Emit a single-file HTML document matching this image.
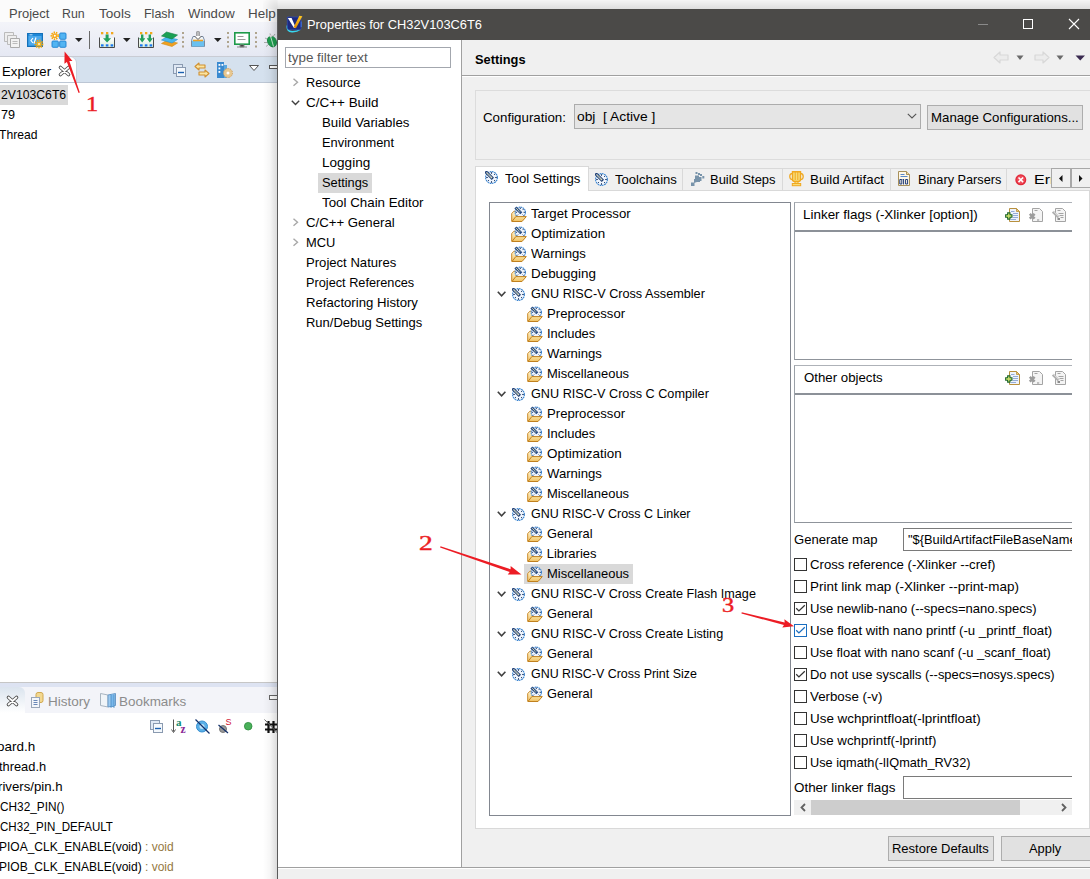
<!DOCTYPE html><html><head><meta charset="utf-8"><style>
html,body{margin:0;padding:0;width:1090px;height:879px;overflow:hidden;background:#fff;}
body{position:relative;font-family:"Liberation Sans", sans-serif;}
.t{position:absolute;white-space:pre;line-height:1;}
.r{position:absolute;box-sizing:border-box;}
svg.r{overflow:visible}
.clip{position:absolute;overflow:hidden}
</style></head><body>

<svg width="0" height="0" style="position:absolute">
<defs>
<linearGradient id="gFold" x1="0" y1="0" x2="0" y2="1"><stop offset="0" stop-color="#fff4d0"/><stop offset="1" stop-color="#f3c46a"/></linearGradient>
<linearGradient id="gFold2" x1="0" y1="0" x2="0" y2="1"><stop offset="0" stop-color="#fbe3a0"/><stop offset="1" stop-color="#f0c060"/></linearGradient>
<symbol id="gear" viewBox="0 0 13 13">
 <circle cx="6.5" cy="6.5" r="5.9" fill="#f0f5fc" stroke="#3a84d0" stroke-width="1.1" stroke-dasharray="1.7 0.6"/>
 <path d="M6.5 1.2v1.6M6.5 10.2v1.6M1.2 6.5h1.6M10.2 6.5h1.6M2.8 10.2l1.1-1.1M10.2 10.2l-1.1-1.1M10.2 2.8l-1.1 1.1" stroke="#203a68" stroke-width="1"/>
 <path d="M0.4 0.4L7.9 7.9" stroke="#1f3f78" stroke-width="3.2"/>
 <path d="M1.4 1.4L7 7" stroke="#f6eec0" stroke-width="1.3"/>
 <path d="M1.8 1.8L6.8 6.8" stroke="#2a5290" stroke-width="0.8" stroke-dasharray="0.7 1.1"/>
</symbol>
<symbol id="fgear" viewBox="0 0 16 16">
 <path d="M0.7 15.2V7.6L2.9 5.2H6V10.6L1.4 15.4Z" fill="url(#gFold)" stroke="#c98a2c" stroke-width="1"/>
 <g transform="translate(3.6,0.6) scale(0.88)">
 <circle cx="6.5" cy="6.5" r="5.9" fill="#f0f5fc" stroke="#3a84d0" stroke-width="1.2" stroke-dasharray="1.7 0.6"/>
 <path d="M6.5 1.2v1.6M1.2 6.5h1.6M10.2 6.5h1.6M2.8 10.2l1.1-1.1M10.2 10.2l-1.1-1.1M10.2 2.8l-1.1 1.1" stroke="#203a68" stroke-width="1.1"/>
 <path d="M0.9 0.9L7.6 7.6" stroke="#244a86" stroke-width="3.2"/>
 <path d="M1.7 1.7L6.7 6.7" stroke="#f4ecb0" stroke-width="1.2" stroke-dasharray="1 0.85"/>
 </g>
 <path d="M4.8 10.6H15.3L11 15.5H1Z" fill="url(#gFold2)" stroke="#c0801e" stroke-width="1" stroke-linejoin="round"/>
</symbol>
<symbol id="adddoc" viewBox="0 0 16 15">
 <path d="M4.5 0.5H11.5L14.5 3.5V13.5H4.5Z" fill="#eef3fc" stroke="#b8903e" stroke-width="1"/>
 <path d="M11.5 0.5V3.5H14.5Z" fill="#f0c878" stroke="#b8903e" stroke-width="0.8"/>
 <path d="M6 3.5h3.5M8 5.5h5M8 7.5h5M8 9.5h5M6 11.5h5" stroke="#8aa4d4" stroke-width="0.9"/>
 <path d="M3.8 4.3v7.4M0.1 8h7.4" stroke="#1b6428" stroke-width="3.4"/>
 <path d="M3.8 5.4v5.2M1.2 8h5.2" stroke="#d2e46c" stroke-width="1.3"/>
</symbol>
<symbol id="deldoc" viewBox="0 0 16 15">
 <path d="M4.5 0.5H11.5L14.5 3.5V13.5H4.5Z" fill="#f4f4f4" stroke="#a4a4a4" stroke-width="1"/>
 <path d="M6.5 2.5h3" stroke="#a4a4a4" stroke-width="1"/>
 <path d="M1.8 5.8L6.6 10.6M6.6 5.8L1.8 10.6" stroke="#9c9c9c" stroke-width="2.6"/>
 <path d="M9 12h2.2" stroke="#9c9c9c" stroke-width="1.2"/>
</symbol>
<symbol id="editdoc" viewBox="0 0 16 15">
 <path d="M3.5 0.5H10.5L13.5 3.5V13.5H3.5Z" fill="#f4f4f4" stroke="#a4a4a4" stroke-width="1"/>
 <path d="M5.5 2.5h3M6.5 5.5h5M7.5 7.5h4M8.5 9.5h3" stroke="#a4a4a4" stroke-width="1"/>
 <path d="M0.8 3.6L6.6 9.4" stroke="#b0b0b0" stroke-width="2.6"/>
 <path d="M1.4 3.2L6.8 8.6" stroke="#e8e8e8" stroke-width="0.8"/>
 <path d="M5.5 10h2.5v2h-2.5z" fill="#8c8c8c"/>
</symbol>
<symbol id="chk" viewBox="0 0 13 13">
 <path d="M2.2 6.3L4.9 8.9L10.8 3.3" fill="none" stroke="currentColor" stroke-width="1.3"/>
</symbol>
</defs></svg>

<div class="r" style="left:0px;top:0px;width:278px;height:22px;background:#fbfbfb"></div>
<div class="r" style="left:0px;top:22px;width:278px;height:35px;background:linear-gradient(#f3f4f9,#e5e8f3)"></div>
<div class="r" style="left:0px;top:56px;width:278px;height:1px;background:#c9ccd4"></div>
<div class="t" style="left:8.51px;top:7.00px;font-size:13px;color:#4a4a4a;transform:scaleX(0.9949);transform-origin:0 0;">Project</div>
<div class="t" style="left:62.45px;top:7.00px;font-size:13px;color:#4a4a4a;transform:scaleX(0.9500);transform-origin:0 0;">Run</div>
<div class="t" style="left:99.14px;top:7.00px;font-size:13px;color:#4a4a4a;transform:scaleX(1.0454);transform-origin:0 0;">Tools</div>
<div class="t" style="left:144.14px;top:7.00px;font-size:13px;color:#4a4a4a;transform:scaleX(0.9600);transform-origin:0 0;">Flash</div>
<div class="t" style="left:188.30px;top:7.00px;font-size:13px;color:#4a4a4a;transform:scaleX(1.0097);transform-origin:0 0;">Window</div>
<div class="t" style="left:248.17px;top:7.00px;font-size:13px;color:#4a4a4a;transform:scaleX(1.0337);transform-origin:0 0;">Help</div>
<svg class="r" style="left:4px;top:32px;" width="16" height="16" viewBox="0 0 16 16"><path d="M0.5 0.5h9v9h-9z" fill="#eee" stroke="#bbb"/><path d="M3.5 3.5h9v9h-9z" fill="#eee" stroke="#bbb"/><path d="M6.5 6.5h9v9h-9z" fill="#f2f2f2" stroke="#aaa"/><path d="M8.5 9.5h5M8.5 11.5h5" stroke="#bbb"/></svg>
<svg class="r" style="left:27px;top:32px;" width="16" height="16" viewBox="0 0 16 16"><rect x="0.5" y="1.5" width="15" height="13" fill="#1e88d8" stroke="#1570b8"/><rect x="1.5" y="4" width="13" height="9.5" fill="#4aa8ec"/><path d="M2.5 2.8h3" stroke="#bfe2fb"/><path d="M6 6L4 8.5L6 11M9 5.5L7 11.5" stroke="#fff" stroke-width="1.2" fill="none"/><circle cx="12" cy="12" r="3.6" fill="none" stroke="#f5a300" stroke-width="1.6" stroke-dasharray="1.4 1"/><circle cx="12" cy="12" r="2.6" fill="#f6b21a"/><circle cx="12" cy="12" r="1" fill="#fff6d0"/></svg>
<svg class="r" style="left:51px;top:32px;" width="16" height="16" viewBox="0 0 16 16"><circle cx="3.8" cy="3.8" r="3.4" fill="none" stroke="#f5a300" stroke-width="1.6" stroke-dasharray="1.4 1"/><circle cx="3.8" cy="3.8" r="2.5" fill="#f6a81a"/><circle cx="3.8" cy="3.8" r="1" fill="#fff"/><rect x="8.7" y="1" width="6.3" height="6.3" rx="1" fill="#52b4f2" stroke="#1c80d0" stroke-width="0.9"/><rect x="1" y="9" width="6.3" height="6.3" rx="1" fill="#52b4f2" stroke="#1c80d0" stroke-width="0.9"/><rect x="8.7" y="9" width="6.3" height="6.3" rx="1" fill="#52b4f2" stroke="#1c80d0" stroke-width="0.9"/></svg>
<svg class="r" style="left:75px;top:38px;" width="8" height="4" viewBox="0 0 8 4"><path d="M0 0h7.5L3.75 4z" fill="#222"/></svg>
<div class="r" style="left:89px;top:31px;width:1px;height:18px;background:#6a6a6a"></div>
<svg class="r" style="left:99px;top:31px;" width="16" height="17" viewBox="0 0 16 17"><defs><linearGradient id="gdl" x1="0" y1="0" x2="0" y2="1"><stop offset="0" stop-color="#fff"/><stop offset="1" stop-color="#d8ecd8"/></linearGradient></defs><rect x="2" y="1" width="2.3" height="2.3" fill="#f2a81d"/><rect x="7" y="1" width="2.3" height="2.3" fill="#f2a81d"/><rect x="12" y="1" width="2.3" height="2.3" fill="#f2a81d"/><rect x="1" y="7" width="14" height="9" fill="url(#gdl)"/><path d="M0.5 6.5V16.5H15.5V6.5" fill="none" stroke="#4a4a4a"/><path d="M6.6 3.5h3v3.8h2.6L8.1 11.6L4 7.3h2.6z" fill="#22a05c"/><rect x="2" y="13.3" width="2.6" height="2.2" fill="#1a78f0"/><rect x="6.8" y="13.3" width="2.6" height="2.2" fill="#1a78f0"/><rect x="11.6" y="13.3" width="2.6" height="2.2" fill="#1a78f0"/></svg>
<svg class="r" style="left:123px;top:38px;" width="8" height="4" viewBox="0 0 8 4"><path d="M0 0h7.5L3.75 4z" fill="#222"/></svg>
<svg class="r" style="left:138px;top:31px;" width="16" height="17" viewBox="0 0 16 17"><rect x="2" y="1" width="2.3" height="2.3" fill="#f2a81d"/><rect x="7" y="1" width="2.3" height="2.3" fill="#f2a81d"/><rect x="12" y="1" width="2.3" height="2.3" fill="#f2a81d"/><rect x="1" y="7" width="14" height="9" fill="url(#gdl)"/><path d="M0.5 6.5V16.5H15.5V6.5" fill="none" stroke="#4a4a4a"/><path d="M3 3.5h2.4v3.8h2L4.2 11.6L1 7.3h2zM10.6 3.5h2.4v3.8h2L11.8 11.6L8.6 7.3h2z" fill="#22a05c"/><rect x="2" y="13.3" width="2.6" height="2.2" fill="#1a78f0"/><rect x="6.8" y="13.3" width="2.6" height="2.2" fill="#1a78f0"/><rect x="11.6" y="13.3" width="2.6" height="2.2" fill="#1a78f0"/></svg>
<svg class="r" style="left:161px;top:31px;" width="17" height="17" viewBox="0 0 17 17"><path d="M0.5 12.5L5.5 9.5L16.5 12L11 15.5z" fill="#f0a020" stroke="#d08810" stroke-width="0.6"/><path d="M0.5 9L5.5 6L16.5 8.5L11 12z" fill="#48b8f0" stroke="#2a90d0" stroke-width="0.6"/><path d="M0.5 5L5.5 1L16.5 4L11 8z" fill="#1aa055" stroke="#108040" stroke-width="0.6"/></svg>
<svg class="r" style="left:182px;top:32px;" width="2" height="16" viewBox="0 0 2 16"><path d="M1 0v2M1 4.5v2M1 9v2M1 13.5v2" stroke="#9a8a6a" stroke-width="1.5"/></svg>
<svg class="r" style="left:190px;top:31px;" width="16" height="17" viewBox="0 0 16 17"><path d="M1.5 9.5L3 5.5H13L14.5 9.5V15.5H1.5Z" fill="#eef4fa" stroke="#7a8aa0"/><path d="M2 9.5h12v6h-12z" fill="#6ac0f0"/><path d="M3 9.5h10" stroke="#f0a020" stroke-width="1.6"/><path d="M8 0.5v6" stroke="#555" stroke-width="3"/><path d="M8 1v5.5" stroke="#fff" stroke-width="1.2"/><path d="M4.5 5L8 8.5L11.5 5" fill="#fff" stroke="#555"/></svg>
<svg class="r" style="left:214px;top:38px;" width="8" height="4" viewBox="0 0 8 4"><path d="M0 0h7.5L3.75 4z" fill="#222"/></svg>
<svg class="r" style="left:227px;top:32px;" width="2" height="16" viewBox="0 0 2 16"><path d="M1 0v2M1 4.5v2M1 9v2M1 13.5v2" stroke="#9a8a6a" stroke-width="1.5"/></svg>
<svg class="r" style="left:234px;top:32px;" width="16" height="16" viewBox="0 0 16 16"><rect x="0.8" y="0.8" width="14.4" height="11.4" fill="#fff" stroke="#1e9a4a" stroke-width="1.6"/><path d="M3.5 4.5h6M3.5 7.5h8" stroke="#999" stroke-width="1.2"/><path d="M6 13h4v2h-4zM3 15h10" stroke="#888" stroke-width="1"/></svg>
<svg class="r" style="left:255px;top:32px;" width="2" height="16" viewBox="0 0 2 16"><path d="M1 0v2M1 4.5v2M1 9v2M1 13.5v2" stroke="#9a8a6a" stroke-width="1.5"/></svg>
<svg class="r" style="left:263px;top:32px;" width="15" height="16" viewBox="0 0 15 16"><path d="M2 6l3 1.5M1 10.5h3.5M3 14.5l2.5-2M12 2l-1.5 2M7 1.5l0.5 2" stroke="#999" stroke-width="0.8"/><ellipse cx="9" cy="9.5" rx="4.3" ry="5.6" transform="rotate(-25 9 9.5)" fill="#1ea050" stroke="#168040" stroke-width="0.8"/><path d="M6.5 4.5Q8 3.5 9.5 4" stroke="#ddd" stroke-width="2"/><path d="M7.8 5L10.5 14.5" stroke="#d8efe0" stroke-width="0.9"/></svg>
<div class="r" style="left:0px;top:57px;width:278px;height:26px;background:#d5e1ee"></div>
<div class="r" style="left:0;top:57px;width:76px;height:26px;background:#fff;border-top-right-radius:6px;box-shadow:1px 0 0 #c8d2de"></div>
<div class="r" style="left:0px;top:82px;width:278px;height:1px;background:#bcc6d4"></div>
<div class="t" style="left:1.79px;top:65.00px;font-size:13px;color:#000;transform:scaleX(1.0138);transform-origin:0 0;">Explorer</div>
<svg class="r" style="left:59px;top:66px;" width="11" height="10" viewBox="0 0 11 10"><path d="M1.5 1.5L9.5 8.5M9.5 1.5L1.5 8.5" stroke="#505050" stroke-width="3.6" stroke-linecap="round"/><path d="M1.5 1.5L9.5 8.5M9.5 1.5L1.5 8.5" stroke="#fff" stroke-width="1.7" stroke-linecap="round"/></svg>
<svg class="r" style="left:173px;top:64px;" width="13" height="13" viewBox="0 0 13 13"><rect x="0.5" y="0.5" width="9" height="9" fill="#dfe8f4" stroke="#8a9ab0"/><rect x="3.5" y="3.5" width="9" height="9" fill="#f4f8fc" stroke="#8a9ab0"/><path d="M5 8.5h6" stroke="#1a60b0" stroke-width="1.4"/></svg>
<svg class="r" style="left:194px;top:62px;" width="16" height="16" viewBox="0 0 16 16"><path d="M1 4.5L5 1V3H11V6H5V8Z" fill="#fbe5a0" stroke="#d09030" stroke-width="1.1" stroke-linejoin="round"/><path d="M15 11.5L11 8V10H5V13H11V15Z" fill="#fbe5a0" stroke="#d09030" stroke-width="1.1" stroke-linejoin="round"/></svg>
<svg class="r" style="left:217px;top:62px;" width="16" height="16" viewBox="0 0 16 16"><rect x="0" y="0" width="7" height="16" fill="#3a8ad0"/><rect x="1.5" y="2" width="1.8" height="1.8" fill="#fff"/><rect x="4.5" y="2" width="1.8" height="1.8" fill="#fff"/><rect x="1.5" y="5.5" width="1.8" height="1.8" fill="#fff"/><rect x="1.5" y="9" width="1.8" height="1.8" fill="#fff"/><rect x="7" y="3" width="3" height="13" fill="#5aa8e0"/><circle cx="11" cy="11" r="4.5" fill="#e8c890" stroke="#d0a060" stroke-dasharray="1.5 1"/><circle cx="11" cy="11" r="1.5" fill="#fff"/></svg>
<svg class="r" style="left:249px;top:65px;" width="10" height="6" viewBox="0 0 10 6"><path d="M0.5 0.5h9L5 5.5z" fill="#fff" stroke="#555"/></svg>
<svg class="r" style="left:269px;top:65px;" width="9" height="4" viewBox="0 0 9 4"><rect x="0.5" y="0.5" width="10" height="3" fill="#fff" stroke="#555"/></svg>
<div class="r" style="left:0px;top:85px;width:68px;height:20px;background:#d9d9d9"></div>
<div class="t" style="left:0.93px;top:88.00px;font-size:13px;color:#000;transform:scaleX(0.9392);transform-origin:0 0;">2V103C6T6</div>
<div class="t" style="left:0.91px;top:108.00px;font-size:13px;color:#000;transform:scaleX(0.9704);transform-origin:0 0;">79</div>
<div class="t" style="left:-0.53px;top:128.00px;font-size:13px;color:#000;transform:scaleX(0.9317);transform-origin:0 0;">Thread</div>
<svg class="r" style="left:0px;top:0px;" width="1" height="1" viewBox="0 0 1 1"><path d="M79.81 92.58 L69.33 61.06 L72.45 61.02 L64.60 51.60 L64.44 63.86 L66.88 61.93 L78.59 93.02Z" fill="#ec1c24"/></svg>
<div class="t" style="left:85.88px;top:94.07px;font-size:20px;color:#ec1c24;transform:scaleX(1.2143);transform-origin:0 0;font-family:'Liberation Serif',serif;-webkit-text-stroke:0.45px #ec1c24;">1</div>
<div class="r" style="left:0px;top:682px;width:278px;height:1px;background:#c6c6c6"></div>
<div class="r" style="left:0px;top:683px;width:278px;height:4px;background:#dde3f2"></div>
<div class="r" style="left:0px;top:687px;width:278px;height:26px;background:#f3f4f9"></div>
<div class="r" style="left:0;top:687px;width:25px;height:26px;background:linear-gradient(#dbe4ee,#fff);border-top-right-radius:6px"></div>
<svg class="r" style="left:7px;top:696px;" width="11" height="10" viewBox="0 0 11 10"><path d="M1.5 1.5L9.5 8.5M9.5 1.5L1.5 8.5" stroke="#505050" stroke-width="3.6" stroke-linecap="round"/><path d="M1.5 1.5L9.5 8.5M9.5 1.5L1.5 8.5" stroke="#fff" stroke-width="1.7" stroke-linecap="round"/></svg>
<svg class="r" style="left:31px;top:692px;" width="13" height="16" viewBox="0 0 13 16"><rect x="5" y="0.5" width="7" height="10" rx="2" fill="#f3d890" stroke="#d0a850"/><rect x="0.5" y="5.5" width="8" height="10" fill="#f4f6fa" stroke="#9aa6b8"/><path d="M2.5 8.5h4M2.5 10.5h4M2.5 12.5h4" stroke="#6a88b8"/></svg>
<div class="t" style="left:47.76px;top:695.00px;font-size:13px;color:#8c8c8c;transform:scaleX(1.0405);transform-origin:0 0;">History</div>
<svg class="r" style="left:100px;top:692px;" width="16" height="16" viewBox="0 0 16 16"><path d="M0.5 1.5L8 3V15L0.5 13.5z" fill="#f0f4f8" stroke="#a8b4c0"/><path d="M8 3L15.5 1.5V13.5L8 15z" fill="#9ccaf0" stroke="#6a9ac8"/><path d="M11 2.5v13l1.5-1.5 1.5 1.5v-13" fill="#7ab8ec" stroke="#4a8ac0" stroke-width="0.8"/></svg>
<div class="t" style="left:118.97px;top:695.00px;font-size:13px;color:#8c8c8c;transform:scaleX(1.0346);transform-origin:0 0;">Bookmarks</div>
<div class="r" style="left:0px;top:713px;width:278px;height:166px;background:#fff"></div>
<svg class="r" style="left:150px;top:720px;" width="13" height="13" viewBox="0 0 13 13"><rect x="0.5" y="0.5" width="9" height="9" fill="#dfe8f4" stroke="#8a9ab0"/><rect x="3.5" y="3.5" width="9" height="9" fill="#f4f8fc" stroke="#8a9ab0"/><path d="M5 8.5h6" stroke="#1a60b0" stroke-width="1.4"/></svg>
<svg class="r" style="left:171px;top:719px;" width="17" height="15" viewBox="0 0 17 15"><path d="M2.5 0.5v12" stroke="#555" stroke-width="1"/><path d="M0.5 10.5L2.5 13.5L4.5 10.5" fill="none" stroke="#555"/></svg>
<div class="t" style="left:176.00px;top:716.69px;font-size:11px;color:#108a70;font-weight:bold;font-family:'Liberation Serif',serif;">a</div>
<div class="t" style="left:180.50px;top:723.77px;font-size:11.5px;color:#8a2a98;font-weight:bold;font-family:'Liberation Serif',serif;">z</div>
<svg class="r" style="left:195px;top:719px;" width="15" height="15" viewBox="0 0 15 15"><circle cx="7" cy="7.5" r="5.5" fill="#5ab0e8" stroke="#3a90d0"/><circle cx="7" cy="7.5" r="2.5" fill="#bfe4fa"/><path d="M0.5 0.5L14.5 14.5" stroke="#12306a" stroke-width="1.2"/></svg>
<svg class="r" style="left:218px;top:719px;" width="14" height="15" viewBox="0 0 14 15"><circle cx="5" cy="10" r="3.5" fill="#999" stroke="#777"/><path d="M0.5 6L10 14" stroke="#12306a" stroke-width="1.2"/></svg>
<div class="t" style="left:225.50px;top:718.38px;font-size:9px;color:#d01030;">S</div>
<svg class="r" style="left:244px;top:722px;" width="9" height="9" viewBox="0 0 9 9"><circle cx="4.2" cy="4.2" r="3.8" fill="#4ab05a" stroke="#2a8a3a" stroke-width="0.8"/></svg>
<svg class="r" style="left:264px;top:719px;" width="14" height="15" viewBox="0 0 14 15"><path d="M4.5 2v12M9.5 2v12M1 5.5h13M1 10.5h13" stroke="#111" stroke-width="2.2"/><path d="M0.5 0.5L13.5 14" stroke="#666" stroke-width="1"/></svg>
<svg class="r" style="left:269px;top:695px;" width="9" height="5" viewBox="0 0 9 5"><rect x="0.5" y="0.5" width="10" height="4" fill="#fff" stroke="#666"/></svg>
<div class="t" style="left:-2.52px;top:739.70px;font-size:13px;color:#000;transform:scaleX(1.0338);transform-origin:0 0;">oard.h</div>
<div class="t" style="left:-1.00px;top:759.70px;font-size:13px;color:#000;transform:scaleX(0.9872);transform-origin:0 0;">thread.h</div>
<div class="t" style="left:-2.26px;top:779.70px;font-size:13px;color:#000;transform:scaleX(1.0145);transform-origin:0 0;">rivers/pin.h</div>
<div class="t" style="left:-0.45px;top:799.70px;font-size:13px;color:#000;transform:scaleX(0.9094);transform-origin:0 0;">CH32_PIN()</div>
<div class="t" style="left:-0.44px;top:819.70px;font-size:13px;color:#000;transform:scaleX(0.8895);transform-origin:0 0;">CH32_PIN_DEFAULT</div>
<div class="t" style="left:-0.92px;top:839.50px;font-size:13px;color:#000;transform:scaleX(0.9227);transform-origin:0 0;">PIOA_CLK_ENABLE(void)<span style="color:#957944"> : void</span></div>
<div class="t" style="left:-0.92px;top:859.50px;font-size:13px;color:#000;transform:scaleX(0.9227);transform-origin:0 0;">PIOB_CLK_ENABLE(void)<span style="color:#957944"> : void</span></div>
<div class="r" style="left:263px;top:9px;width:14px;height:870px;background:linear-gradient(to right,rgba(0,0,0,0),rgba(0,0,0,0.035) 50%,rgba(0,0,0,0.14))"></div>
<div class="r" style="left:277px;top:0px;width:813px;height:9px;background:linear-gradient(rgba(0,0,0,0.04),rgba(0,0,0,0.13))"></div>
<div class="r" style="left:263px;top:0px;width:14px;height:9px;background:radial-gradient(circle at 100% 100%,rgba(0,0,0,0.13),rgba(0,0,0,0.03) 70%,rgba(0,0,0,0) 100%)"></div>
<div class="r" style="left:277px;top:9px;width:813px;height:31px;background:#4b4a48"></div>
<svg class="r" style="left:286px;top:15px;" width="17" height="18" viewBox="0 0 17 18"><defs><linearGradient id="gy" x1="0" y1="1" x2="0" y2="0"><stop offset="0" stop-color="#e08a00"/><stop offset="1" stop-color="#ffc820"/></linearGradient></defs><path d="M1.2 10.5Q0.5 16.5 6 16.8Q11 17 14 14.5" fill="none" stroke="#38d8ee" stroke-width="1.5"/><path d="M1.3 2H15V13.5Q15 14.8 13.7 14.8H3.5Q1.3 14.8 1.3 12.5Z" fill="#1d2a80" stroke="#2e4cb8" stroke-width="0.7"/><path d="M15.2 6.5V12" stroke="#3a70e8" stroke-width="1"/><path d="M1.8 3L5.6 3L9.6 12.4L8 13z" fill="#fff"/><path d="M7.6 12.2L13.4 0.8L16.4 1.3L9.9 13.2z" fill="url(#gy)"/></svg>
<div class="t" style="left:306.51px;top:18.00px;font-size:13px;color:#fff;transform:scaleX(0.9886);transform-origin:0 0;">Properties for CH32V103C6T6</div>
<div class="r" style="left:978px;top:24px;width:10px;height:1px;background:#8a8a8a"></div>
<div class="r" style="left:1023px;top:19px;width:10px;height:10px;border:1px solid #fff"></div>
<svg class="r" style="left:1069px;top:19px;" width="10" height="10" viewBox="0 0 10 10"><path d="M0 0L10 10M10 0L0 10" stroke="#fff" stroke-width="1.1"/></svg>
<div class="r" style="left:277px;top:40px;width:813px;height:839px;background:#f0f0f0"></div>
<div class="r" style="left:277px;top:9px;width:1px;height:870px;background:#5a5a5a"></div>
<div class="r" style="left:278px;top:40px;width:183px;height:827px;background:#fff"></div>
<div class="r" style="left:461px;top:40px;width:1px;height:828px;background:#a0a0a0"></div>
<div class="r" style="left:285px;top:47px;width:166px;height:21px;background:#fff;border:1px solid #a3a7ae"></div>
<div class="t" style="left:287.70px;top:51.00px;font-size:13px;color:#575757;transform:scaleX(1.0317);transform-origin:0 0;">type filter text</div>
<div class="r" style="left:318px;top:173px;width:54px;height:20px;background:#d9d9d9"></div>
<svg class="r" style="left:292px;top:78px;" width="8" height="9" viewBox="0 0 8 9"><path d="M1.5 0.8L5.5 4.3L1.5 7.8" fill="none" stroke="#a8a8a8" stroke-width="1.4"/></svg>
<div class="t" style="left:305.60px;top:76.00px;font-size:13px;color:#000;transform:scaleX(0.9792);transform-origin:0 0;">Resource</div>
<svg class="r" style="left:291px;top:100px;" width="9" height="6" viewBox="0 0 9 6"><path d="M0.8 0.8L4.5 4.5L8.2 0.8" fill="none" stroke="#404040" stroke-width="1.4"/></svg>
<div class="t" style="left:305.60px;top:96.00px;font-size:13px;color:#000;transform:scaleX(1.0354);transform-origin:0 0;">C/C++ Build</div>
<div class="t" style="left:321.70px;top:116.00px;font-size:13px;color:#000;transform:scaleX(1.0194);transform-origin:0 0;">Build Variables</div>
<div class="t" style="left:321.70px;top:136.00px;font-size:13px;color:#000;transform:scaleX(0.9877);transform-origin:0 0;">Environment</div>
<div class="t" style="left:321.70px;top:156.00px;font-size:13px;color:#000;transform:scaleX(1.0418);transform-origin:0 0;">Logging</div>
<div class="t" style="left:321.70px;top:176.00px;font-size:13px;color:#000;transform:scaleX(0.9849);transform-origin:0 0;">Settings</div>
<div class="t" style="left:321.70px;top:196.00px;font-size:13px;color:#000;transform:scaleX(1.0258);transform-origin:0 0;">Tool Chain Editor</div>
<svg class="r" style="left:292px;top:218px;" width="8" height="9" viewBox="0 0 8 9"><path d="M1.5 0.8L5.5 4.3L1.5 7.8" fill="none" stroke="#a8a8a8" stroke-width="1.4"/></svg>
<div class="t" style="left:305.60px;top:216.00px;font-size:13px;color:#000;transform:scaleX(1.0144);transform-origin:0 0;">C/C++ General</div>
<svg class="r" style="left:292px;top:238px;" width="8" height="9" viewBox="0 0 8 9"><path d="M1.5 0.8L5.5 4.3L1.5 7.8" fill="none" stroke="#a8a8a8" stroke-width="1.4"/></svg>
<div class="t" style="left:305.60px;top:236.00px;font-size:13px;color:#000;transform:scaleX(0.9913);transform-origin:0 0;">MCU</div>
<div class="t" style="left:305.60px;top:256.00px;font-size:13px;color:#000;transform:scaleX(1.0073);transform-origin:0 0;">Project Natures</div>
<div class="t" style="left:305.60px;top:276.00px;font-size:13px;color:#000;transform:scaleX(0.9787);transform-origin:0 0;">Project References</div>
<div class="t" style="left:305.60px;top:296.00px;font-size:13px;color:#000;transform:scaleX(1.0127);transform-origin:0 0;">Refactoring History</div>
<div class="t" style="left:305.60px;top:316.00px;font-size:13px;color:#000;transform:scaleX(0.9983);transform-origin:0 0;">Run/Debug Settings</div>
<div class="t" style="left:474.75px;top:53.00px;font-size:13px;color:#000;font-weight:bold;transform:scaleX(0.9861);transform-origin:0 0;">Settings</div>
<svg class="r" style="left:993px;top:51px;" width="17" height="14" viewBox="0 0 17 14"><path d="M1 6.5L7 1V4H15V9H7V12Z" fill="#ececec" stroke="#d8d8d8" stroke-width="1.2" stroke-linejoin="round"/></svg>
<svg class="r" style="left:1016px;top:55px;" width="8" height="6" viewBox="0 0 8 6"><path d="M0.5 0.5h7L4 5z" fill="#6a6a6a"/></svg>
<svg class="r" style="left:1033px;top:51px;" width="17" height="14" viewBox="0 0 17 14"><path d="M16 6.5L10 1V4H2V9H10V12Z" fill="#ececec" stroke="#d8d8d8" stroke-width="1.2" stroke-linejoin="round"/></svg>
<svg class="r" style="left:1056px;top:55px;" width="8" height="6" viewBox="0 0 8 6"><path d="M0.5 0.5h7L4 5z" fill="#6a6a6a"/></svg>
<svg class="r" style="left:1075px;top:55px;" width="10" height="6" viewBox="0 0 10 6"><path d="M0.5 0.5h9.5L5.25 5.5z" fill="#3a2a50"/></svg>
<div class="r" style="left:462px;top:75px;width:628px;height:1px;background:#a0a0a0"></div>
<div class="r" style="left:462px;top:76px;width:628px;height:1px;background:#fff"></div>
<div class="r" style="left:475px;top:90px;width:620px;height:70px;border:1px solid #dcdcdc"></div>
<div class="t" style="left:483.09px;top:110.50px;font-size:13px;color:#000;transform:scaleX(1.0246);transform-origin:0 0;">Configuration:</div>
<div class="r" style="left:574px;top:104px;width:347px;height:25px;background:#e5e5e5;border:1px solid #acacac"></div>
<div class="t" style="left:577.47px;top:110.00px;font-size:13px;color:#000;transform:scaleX(1.0630);transform-origin:0 0;">obj  [ Active ]</div>
<svg class="r" style="left:907px;top:113px;" width="10" height="6" viewBox="0 0 10 6"><path d="M0.8 0.8L5 5L9.2 0.8" fill="none" stroke="#555" stroke-width="1.1"/></svg>
<div class="r" style="left:927px;top:105px;width:156px;height:25px;background:#e1e1e1;border:1px solid #adadad"></div>
<div class="t" style="left:931.38px;top:111.00px;font-size:13px;color:#000;transform:scaleX(1.0175);transform-origin:0 0;">Manage Configurations...</div>
<div class="r" style="left:475px;top:190px;width:615px;height:639px;background:#fff;border:1px solid #d9d9d9"></div>
<div class="r" style="left:588px;top:168px;width:95px;height:23px;background:#f0f0f0;border:1px solid #d9d9d9"></div>
<div class="t" style="left:614.95px;top:173.30px;font-size:13px;color:#000;transform:scaleX(1.0074);transform-origin:0 0;">Toolchains</div>
<svg class="r" style="left:595px;top:173px;" width="13" height="13"><use href="#gear" width="13" height="13"/></svg>
<div class="r" style="left:682px;top:168px;width:101px;height:23px;background:#f0f0f0;border:1px solid #d9d9d9"></div>
<div class="t" style="left:710.30px;top:173.30px;font-size:13px;color:#000;transform:scaleX(0.9961);transform-origin:0 0;">Build Steps</div>
<svg class="r" style="left:690px;top:172px;" width="15" height="14" viewBox="0 0 15 14"><g fill="#7893aa"><rect x="5" y="3.5" width="4" height="5"/><path d="M4 7h6v3h-3l-3 1z"/><rect x="8" y="5" width="3.5" height="4"/><rect x="1" y="10.5" width="3.5" height="3.5"/><rect x="5.5" y="0" width="2" height="2"/><rect x="8" y="1" width="2" height="2"/><rect x="10" y="2" width="2" height="2"/><rect x="12.3" y="4" width="2" height="2.5"/></g></svg>
<div class="r" style="left:782px;top:168px;width:109px;height:23px;background:#f0f0f0;border:1px solid #d9d9d9"></div>
<div class="t" style="left:809.78px;top:173.30px;font-size:13px;color:#000;transform:scaleX(1.0246);transform-origin:0 0;">Build Artifact</div>
<svg class="r" style="left:789px;top:171px;" width="15" height="15" viewBox="0 0 15 15"><path d="M3.5 0.8H11.5V8.5Q11.5 10.5 9 10.5H6Q3.5 10.5 3.5 8.5Z" fill="#f8dc78" stroke="#f0a820" stroke-width="1.4"/><path d="M6.2 1v8M8.8 1v8" stroke="#f0a820" stroke-width="1"/><path d="M3.5 2.5Q0.8 2.5 0.8 5.5Q0.8 8.5 3.5 8.5M11.5 2.5Q14.2 2.5 14.2 5.5Q14.2 8.5 11.5 8.5" fill="none" stroke="#f0a820" stroke-width="1.3"/><rect x="6" y="10.5" width="3" height="2.5" fill="#f8dc78" stroke="#f0a820"/><rect x="3.3" y="12.5" width="8.4" height="2.2" fill="#f8dc78" stroke="#f0a820" stroke-width="1"/></svg>
<div class="r" style="left:890px;top:168px;width:117px;height:23px;background:#f0f0f0;border:1px solid #d9d9d9"></div>
<div class="t" style="left:917.52px;top:173.30px;font-size:13px;color:#000;transform:scaleX(0.9779);transform-origin:0 0;">Binary Parsers</div>
<svg class="r" style="left:898px;top:171px;" width="13" height="15" viewBox="0 0 13 15"><path d="M0.5 0.5H8.5L11.5 3.5V14.5H0.5Z" fill="#fff8e8" stroke="#a8905a"/><path d="M8.5 0.5V3.5H11.5" fill="#f0d8a0" stroke="#a8905a"/><path d="M2.5 3.5h4M2.5 5.5h7" stroke="#5a88c8"/><path d="M1.8 8.5h2v4.5h-2zM7.6 8.5h2v4.5h-2z" fill="none" stroke="#1e3a78" stroke-width="1"/><path d="M5.6 8v5.5M4.8 8.8l0.8-0.8" stroke="#1e3a78" stroke-width="1"/></svg>
<div class="r" style="left:1006px;top:168px;width:47px;height:23px;background:#f0f0f0;border:1px solid #d9d9d9"></div>
<div class="t" style="left:1033.77px;top:173.30px;font-size:13px;color:#000;transform:scaleX(1.2308);transform-origin:0 0;">Err</div>
<svg class="r" style="left:1015px;top:174px;" width="12" height="12" viewBox="0 0 12 12"><circle cx="5.8" cy="5.8" r="5.5" fill="#e02a3a"/><circle cx="5.8" cy="5.8" r="4.2" fill="#f04a58"/><path d="M3.5 3.5L8.1 8.1M8.1 3.5L3.5 8.1" stroke="#fff" stroke-width="1.6"/></svg>
<div class="r" style="left:475px;top:166px;width:114px;height:25px;background:#fff;border:1px solid #d9d9d9;border-bottom:none"></div>
<svg class="r" style="left:485px;top:171px;" width="13" height="13"><use href="#gear" width="13" height="13"/></svg>
<div class="t" style="left:505.25px;top:171.50px;font-size:13px;color:#000;transform:scaleX(1.0129);transform-origin:0 0;">Tool Settings</div>
<div class="r" style="left:1051px;top:188px;width:39px;height:2px;background:#f0f0f0"></div>
<div class="r" style="left:1051px;top:168px;width:20px;height:20px;background:#f0f0f0;border:1px solid #a8a8a8"></div>
<div class="r" style="left:1071px;top:168px;width:20px;height:20px;background:#f0f0f0;border:1px solid #a8a8a8"></div>
<svg class="r" style="left:1059px;top:175px;" width="4" height="7" viewBox="0 0 4 7"><path d="M3.5 0V7L0 3.5z" fill="#111"/></svg>
<svg class="r" style="left:1079px;top:175px;" width="4" height="7" viewBox="0 0 4 7"><path d="M0 0V7L3.5 3.5z" fill="#111"/></svg>
<div class="r" style="left:489px;top:202px;width:302px;height:614px;background:#fff;border:1px solid #828790"></div>
<div class="r" style="left:524px;top:564px;width:109px;height:20px;background:#d9d9d9"></div>
<svg class="r" style="left:511px;top:206px;" width="16" height="16"><use href="#fgear" width="16" height="16"/></svg>
<div class="t" style="left:531.00px;top:207.00px;font-size:13px;color:#000;transform:scaleX(1.0143);transform-origin:0 0;">Target Processor</div>
<svg class="r" style="left:511px;top:226px;" width="16" height="16"><use href="#fgear" width="16" height="16"/></svg>
<div class="t" style="left:531.00px;top:227.00px;font-size:13px;color:#000;transform:scaleX(1.0266);transform-origin:0 0;">Optimization</div>
<svg class="r" style="left:511px;top:246px;" width="16" height="16"><use href="#fgear" width="16" height="16"/></svg>
<div class="t" style="left:531.00px;top:247.00px;font-size:13px;color:#000;transform:scaleX(1.0074);transform-origin:0 0;">Warnings</div>
<svg class="r" style="left:511px;top:266px;" width="16" height="16"><use href="#fgear" width="16" height="16"/></svg>
<div class="t" style="left:531.00px;top:267.00px;font-size:13px;color:#000;transform:scaleX(1.0313);transform-origin:0 0;">Debugging</div>
<svg class="r" style="left:497px;top:291px;" width="10" height="7" viewBox="0 0 10 7"><path d="M0.8 0.8L4.6 4.8L8.4 0.8" fill="none" stroke="#404040" stroke-width="1.6"/></svg>
<svg class="r" style="left:512px;top:288px;" width="13" height="13"><use href="#gear" width="13" height="13"/></svg>
<div class="t" style="left:531.00px;top:287.00px;font-size:13px;color:#000;transform:scaleX(0.9745);transform-origin:0 0;">GNU RISC-V Cross Assembler</div>
<svg class="r" style="left:527px;top:306px;" width="16" height="16"><use href="#fgear" width="16" height="16"/></svg>
<div class="t" style="left:546.70px;top:307.00px;font-size:13px;color:#000;transform:scaleX(1.0097);transform-origin:0 0;">Preprocessor</div>
<svg class="r" style="left:527px;top:326px;" width="16" height="16"><use href="#fgear" width="16" height="16"/></svg>
<div class="t" style="left:546.70px;top:327.00px;font-size:13px;color:#000;transform:scaleX(0.9979);transform-origin:0 0;">Includes</div>
<svg class="r" style="left:527px;top:346px;" width="16" height="16"><use href="#fgear" width="16" height="16"/></svg>
<div class="t" style="left:546.70px;top:347.00px;font-size:13px;color:#000;transform:scaleX(1.0093);transform-origin:0 0;">Warnings</div>
<svg class="r" style="left:527px;top:366px;" width="16" height="16"><use href="#fgear" width="16" height="16"/></svg>
<div class="t" style="left:546.70px;top:367.00px;font-size:13px;color:#000;transform:scaleX(0.9963);transform-origin:0 0;">Miscellaneous</div>
<svg class="r" style="left:497px;top:391px;" width="10" height="7" viewBox="0 0 10 7"><path d="M0.8 0.8L4.6 4.8L8.4 0.8" fill="none" stroke="#404040" stroke-width="1.6"/></svg>
<svg class="r" style="left:512px;top:388px;" width="13" height="13"><use href="#gear" width="13" height="13"/></svg>
<div class="t" style="left:531.00px;top:387.00px;font-size:13px;color:#000;transform:scaleX(0.9732);transform-origin:0 0;">GNU RISC-V Cross C Compiler</div>
<svg class="r" style="left:527px;top:406px;" width="16" height="16"><use href="#fgear" width="16" height="16"/></svg>
<div class="t" style="left:546.70px;top:407.00px;font-size:13px;color:#000;transform:scaleX(1.0097);transform-origin:0 0;">Preprocessor</div>
<svg class="r" style="left:527px;top:426px;" width="16" height="16"><use href="#fgear" width="16" height="16"/></svg>
<div class="t" style="left:546.70px;top:427.00px;font-size:13px;color:#000;transform:scaleX(0.9979);transform-origin:0 0;">Includes</div>
<svg class="r" style="left:527px;top:446px;" width="16" height="16"><use href="#fgear" width="16" height="16"/></svg>
<div class="t" style="left:546.70px;top:447.00px;font-size:13px;color:#000;transform:scaleX(1.0336);transform-origin:0 0;">Optimization</div>
<svg class="r" style="left:527px;top:466px;" width="16" height="16"><use href="#fgear" width="16" height="16"/></svg>
<div class="t" style="left:546.70px;top:467.00px;font-size:13px;color:#000;transform:scaleX(1.0093);transform-origin:0 0;">Warnings</div>
<svg class="r" style="left:527px;top:486px;" width="16" height="16"><use href="#fgear" width="16" height="16"/></svg>
<div class="t" style="left:546.70px;top:487.00px;font-size:13px;color:#000;transform:scaleX(0.9963);transform-origin:0 0;">Miscellaneous</div>
<svg class="r" style="left:497px;top:511px;" width="10" height="7" viewBox="0 0 10 7"><path d="M0.8 0.8L4.6 4.8L8.4 0.8" fill="none" stroke="#404040" stroke-width="1.6"/></svg>
<svg class="r" style="left:512px;top:508px;" width="13" height="13"><use href="#gear" width="13" height="13"/></svg>
<div class="t" style="left:531.00px;top:507.00px;font-size:13px;color:#000;transform:scaleX(0.9602);transform-origin:0 0;">GNU RISC-V Cross C Linker</div>
<svg class="r" style="left:527px;top:526px;" width="16" height="16"><use href="#fgear" width="16" height="16"/></svg>
<div class="t" style="left:546.70px;top:527.00px;font-size:13px;color:#000;transform:scaleX(0.9846);transform-origin:0 0;">General</div>
<svg class="r" style="left:527px;top:546px;" width="16" height="16"><use href="#fgear" width="16" height="16"/></svg>
<div class="t" style="left:546.70px;top:547.00px;font-size:13px;color:#000;transform:scaleX(1.0000);transform-origin:0 0;">Libraries</div>
<svg class="r" style="left:527px;top:566px;" width="16" height="16"><use href="#fgear" width="16" height="16"/></svg>
<div class="t" style="left:546.70px;top:567.00px;font-size:13px;color:#000;transform:scaleX(0.9963);transform-origin:0 0;">Miscellaneous</div>
<svg class="r" style="left:497px;top:591px;" width="10" height="7" viewBox="0 0 10 7"><path d="M0.8 0.8L4.6 4.8L8.4 0.8" fill="none" stroke="#404040" stroke-width="1.6"/></svg>
<svg class="r" style="left:512px;top:588px;" width="13" height="13"><use href="#gear" width="13" height="13"/></svg>
<div class="t" style="left:531.00px;top:587.00px;font-size:13px;color:#000;transform:scaleX(0.9698);transform-origin:0 0;">GNU RISC-V Cross Create Flash Image</div>
<svg class="r" style="left:527px;top:606px;" width="16" height="16"><use href="#fgear" width="16" height="16"/></svg>
<div class="t" style="left:546.70px;top:607.00px;font-size:13px;color:#000;transform:scaleX(0.9846);transform-origin:0 0;">General</div>
<svg class="r" style="left:497px;top:631px;" width="10" height="7" viewBox="0 0 10 7"><path d="M0.8 0.8L4.6 4.8L8.4 0.8" fill="none" stroke="#404040" stroke-width="1.6"/></svg>
<svg class="r" style="left:512px;top:628px;" width="13" height="13"><use href="#gear" width="13" height="13"/></svg>
<div class="t" style="left:531.00px;top:627.00px;font-size:13px;color:#000;transform:scaleX(0.9708);transform-origin:0 0;">GNU RISC-V Cross Create Listing</div>
<svg class="r" style="left:527px;top:646px;" width="16" height="16"><use href="#fgear" width="16" height="16"/></svg>
<div class="t" style="left:546.70px;top:647.00px;font-size:13px;color:#000;transform:scaleX(0.9846);transform-origin:0 0;">General</div>
<svg class="r" style="left:497px;top:671px;" width="10" height="7" viewBox="0 0 10 7"><path d="M0.8 0.8L4.6 4.8L8.4 0.8" fill="none" stroke="#404040" stroke-width="1.6"/></svg>
<svg class="r" style="left:512px;top:668px;" width="13" height="13"><use href="#gear" width="13" height="13"/></svg>
<div class="t" style="left:531.00px;top:667.00px;font-size:13px;color:#000;transform:scaleX(0.9569);transform-origin:0 0;">GNU RISC-V Cross Print Size</div>
<svg class="r" style="left:527px;top:686px;" width="16" height="16"><use href="#fgear" width="16" height="16"/></svg>
<div class="t" style="left:546.70px;top:687.00px;font-size:13px;color:#000;transform:scaleX(0.9846);transform-origin:0 0;">General</div>
<div class="clip" style="left:794px;top:202px;width:278px;height:614px">
<div class="r" style="left:0px;top:0px;width:290px;height:158px;background:#fff;border:1px solid #aeb2b8;border-left-color:#9ba1a8;border-bottom-color:#8f949b"></div>
<div class="r" style="left:1px;top:28px;width:290px;height:2px;background:#8c9198"></div>
<div class="t" style="left:9.47px;top:6.00px;font-size:13px;color:#000;transform:scaleX(1.0332);transform-origin:0 0;">Linker flags (-Xlinker [option])</div>
<svg class="r" style="left:211px;top:6px;" width="16" height="15"><use href="#adddoc" width="16" height="15"/></svg>
<svg class="r" style="left:234px;top:6px;" width="16" height="15"><use href="#deldoc" width="16" height="15"/></svg>
<svg class="r" style="left:258px;top:6px;" width="16" height="15"><use href="#editdoc" width="16" height="15"/></svg>
<div class="r" style="left:0px;top:163px;width:290px;height:158px;background:#fff;border:1px solid #aeb2b8;border-left-color:#9ba1a8;border-bottom-color:#8f949b"></div>
<div class="r" style="left:1px;top:191px;width:290px;height:2px;background:#8c9198"></div>
<div class="t" style="left:9.99px;top:169.00px;font-size:13px;color:#000;transform:scaleX(1.0183);transform-origin:0 0;">Other objects</div>
<svg class="r" style="left:211px;top:169px;" width="16" height="15"><use href="#adddoc" width="16" height="15"/></svg>
<svg class="r" style="left:234px;top:169px;" width="16" height="15"><use href="#deldoc" width="16" height="15"/></svg>
<svg class="r" style="left:258px;top:169px;" width="16" height="15"><use href="#editdoc" width="16" height="15"/></svg>
<div class="t" style="left:-0.10px;top:331.20px;font-size:13px;color:#000;transform:scaleX(1.0037);transform-origin:0 0;">Generate map</div>
<div class="r" style="left:109px;top:326px;width:190px;height:23px;background:#fff;border:1px solid #7a7a7a"></div>
<div class="t" style="left:113.51px;top:331.20px;font-size:13px;color:#000;transform:scaleX(0.9867);transform-origin:0 0;">&quot;${BuildArtifactFileBaseName</div>
<div class="r" style="left:0px;top:356px;width:13px;height:13px;background:#fff;border:1px solid #333"></div>
<div class="t" style="left:15.90px;top:356.00px;font-size:13px;color:#000;transform:scaleX(1.0148);transform-origin:0 0;">Cross reference (-Xlinker --cref)</div>
<div class="r" style="left:0px;top:378px;width:13px;height:13px;background:#fff;border:1px solid #333"></div>
<div class="t" style="left:15.90px;top:378.00px;font-size:13px;color:#000;transform:scaleX(1.0328);transform-origin:0 0;">Print link map (-Xlinker --print-map)</div>
<div class="r" style="left:0px;top:400px;width:13px;height:13px;background:#fff;border:1px solid #333"></div>
<svg class="r" style="left:0px;top:400px;color:#333" width="13" height="13"><use href="#chk" width="13" height="13"/></svg>
<div class="t" style="left:15.90px;top:400.00px;font-size:13px;color:#000;transform:scaleX(1.0036);transform-origin:0 0;">Use newlib-nano (--specs=nano.specs)</div>
<div class="r" style="left:0px;top:422px;width:13px;height:13px;background:#fff;border:1px solid #1a6ec0"></div>
<svg class="r" style="left:0px;top:422px;color:#1a6ec0" width="13" height="13"><use href="#chk" width="13" height="13"/></svg>
<div class="t" style="left:15.90px;top:422.00px;font-size:13px;color:#000;transform:scaleX(1.0158);transform-origin:0 0;">Use float with nano printf (-u _printf_float)</div>
<div class="r" style="left:0px;top:444px;width:13px;height:13px;background:#fff;border:1px solid #333"></div>
<div class="t" style="left:15.90px;top:444.00px;font-size:13px;color:#000;transform:scaleX(0.9921);transform-origin:0 0;">Use float with nano scanf (-u _scanf_float)</div>
<div class="r" style="left:0px;top:466px;width:13px;height:13px;background:#fff;border:1px solid #333"></div>
<svg class="r" style="left:0px;top:466px;color:#333" width="13" height="13"><use href="#chk" width="13" height="13"/></svg>
<div class="t" style="left:15.90px;top:466.00px;font-size:13px;color:#000;transform:scaleX(0.9945);transform-origin:0 0;">Do not use syscalls (--specs=nosys.specs)</div>
<div class="r" style="left:0px;top:488px;width:13px;height:13px;background:#fff;border:1px solid #333"></div>
<div class="t" style="left:15.90px;top:488.00px;font-size:13px;color:#000;transform:scaleX(1.0229);transform-origin:0 0;">Verbose (-v)</div>
<div class="r" style="left:0px;top:510px;width:13px;height:13px;background:#fff;border:1px solid #333"></div>
<div class="t" style="left:15.90px;top:510.00px;font-size:13px;color:#000;transform:scaleX(1.0313);transform-origin:0 0;">Use wchprintfloat(-lprintfloat)</div>
<div class="r" style="left:0px;top:532px;width:13px;height:13px;background:#fff;border:1px solid #333"></div>
<div class="t" style="left:15.90px;top:532.00px;font-size:13px;color:#000;transform:scaleX(1.0232);transform-origin:0 0;">Use wchprintf(-lprintf)</div>
<div class="r" style="left:0px;top:554px;width:13px;height:13px;background:#fff;border:1px solid #333"></div>
<div class="t" style="left:15.90px;top:554.00px;font-size:13px;color:#000;transform:scaleX(0.9798);transform-origin:0 0;">Use iqmath(-lIQmath_RV32)</div>
<div class="t" style="left:-0.22px;top:578.80px;font-size:13px;color:#000;transform:scaleX(1.0314);transform-origin:0 0;">Other linker flags</div>
<div class="r" style="left:109px;top:574px;width:190px;height:23px;background:#fff;border:1px solid #7a7a7a"></div>
<div class="r" style="left:0px;top:598px;width:278px;height:15px;background:#f0f0f0"></div>
<div class="r" style="left:17px;top:598px;width:209px;height:15px;background:#cdcdcd"></div>
<svg class="r" style="left:6px;top:601px;" width="6" height="9" viewBox="0 0 6 9"><path d="M5 1L1.5 4.5L5 8" fill="none" stroke="#606060" stroke-width="1.8"/></svg>
<svg class="r" style="left:267px;top:601px;" width="6" height="9" viewBox="0 0 6 9"><path d="M1 1L4.5 4.5L1 8" fill="none" stroke="#606060" stroke-width="1.8"/></svg>
</div>
<div class="r" style="left:888px;top:836px;width:106px;height:25px;background:#e1e1e1;border:1px solid #adadad"></div>
<div class="t" style="left:892.20px;top:842.00px;font-size:13px;color:#000;transform:scaleX(0.9979);transform-origin:0 0;">Restore Defaults</div>
<div class="r" style="left:1001px;top:836px;width:100px;height:25px;background:#e1e1e1;border:1px solid #adadad"></div>
<div class="t" style="left:1029.40px;top:842.00px;font-size:13px;color:#000;transform:scaleX(0.9908);transform-origin:0 0;">Apply</div>
<div class="r" style="left:278px;top:867px;width:812px;height:1px;background:#a0a0a0"></div>
<div class="r" style="left:278px;top:868px;width:812px;height:1px;background:#fff"></div>
<div class="t" style="left:419.37px;top:533.07px;font-size:20px;color:#ec1c24;transform:scaleX(1.3697);transform-origin:0 0;font-family:'Liberation Serif',serif;-webkit-text-stroke:0.45px #ec1c24;">2</div>
<svg class="r" style="left:0px;top:0px;" width="1" height="1" viewBox="0 0 1 1"><path d="M440.09 547.42 L509.69 571.95 L507.74 574.56 L521.50 574.50 L510.65 566.04 L510.59 569.30 L440.51 546.18Z" fill="#ec1c24"/></svg>
<div class="t" style="left:722.09px;top:595.07px;font-size:20px;color:#ec1c24;transform:scaleX(1.2121);transform-origin:0 0;font-family:'Liberation Serif',serif;-webkit-text-stroke:0.45px #ec1c24;">3</div>
<svg class="r" style="left:0px;top:0px;" width="1" height="1" viewBox="0 0 1 1"><path d="M741.44 613.53 L783.96 625.10 L782.29 627.61 L794.00 626.20 L784.38 619.37 L784.65 622.38 L741.76 612.27Z" fill="#ec1c24"/></svg>
</body></html>
